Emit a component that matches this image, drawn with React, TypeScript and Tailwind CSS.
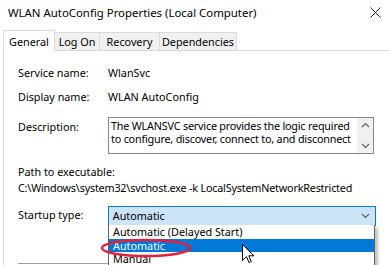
import React from "react";

const font = { fontFamily: '"Noto Sans", "Open Sans", sans-serif' };

function Chevron({ up }: { up?: boolean }) {
  return (
    <svg width="9" height="6" viewBox="0 0 9 6" className="block">
      <path d={up ? "M1 5 L4.5 1.5 L8 5" : "M1 1 L4.5 4.5 L8 1"} fill="none" stroke="#606060" strokeWidth="1.2" />
    </svg>
  );
}

export default function App() {
  return (
    <div className="relative w-[390px] h-[265px] overflow-hidden bg-white text-black text-[10.8px] leading-[16px]" style={font}>
      {/* Title bar */}
      <div className="h-[25px] flex items-center justify-between pl-[8px] pr-[9px]">
        <span className="text-[11.4px]">WLAN AutoConfig Properties (Local Computer)</span>
        <svg width="11" height="11" viewBox="0 0 11 11">
          <path d="M0.5 0.5 L10.5 10.5 M10.5 0.5 L0.5 10.5" stroke="#222" strokeWidth="1" />
        </svg>
      </div>
      {/* Tabs */}
      <div className="h-[25px] flex items-end pl-[3px]">
        <div className="relative z-10 -mb-px h-[21px] w-[52px] bg-white border border-b-0 border-[#d9d9d9] flex items-start justify-center pt-[3px]">General</div>
        <div className="h-[18px] w-[45px] bg-[#f0f0f0] border-t border-r border-[#d9d9d9] flex items-center justify-center">Log On</div>
        <div className="h-[18px] w-[60px] bg-[#f0f0f0] border-t border-r border-[#d9d9d9] flex items-center justify-center">Recovery</div>
        <div className="h-[18px] w-[77px] bg-[#f0f0f0] border-t border-r border-[#d9d9d9] flex items-center justify-center">Dependencies</div>
      </div>
      {/* Panel */}
      <div className="ml-[3px] h-[215px] border-t border-l border-[#d9d9d9] pl-[14px] pr-[14px] flex flex-col">
        <div className="mt-[14px] flex h-[16px]">
          <span className="w-[90px]">Service name:</span>
          <span>WlanSvc</span>
        </div>
        <div className="mt-[8px] flex h-[16px]">
          <span className="w-[90px]">Display name:</span>
          <span>WLAN AutoConfig</span>
        </div>
        <div className="mt-[12px] flex">
          <span className="w-[90px] pt-[2px]">Description:</span>
          <div className="w-[266px] h-[37px] border border-[#828790] flex">
            <div className="flex-1 pl-[2px] pt-[1px] leading-[13px] tracking-[-0.2px] whitespace-nowrap overflow-hidden">
              <div>The WLANSVC service provides the logic required</div>
              <div>to configure, discover, connect to, and disconnect</div>
            </div>
            <div className="w-[16px] bg-[#f0f0f0] flex flex-col items-center justify-between py-[4px]">
              <Chevron up />
              <Chevron />
            </div>
          </div>
        </div>
        <div className="mt-[10px] h-[16px]">Path to executable:</div>
        <div className="h-[15px] whitespace-nowrap tracking-[-0.2px]">C:\Windows\system32\svchost.exe -k LocalSystemNetworkRestricted</div>
        <div className="mt-[11px] flex">
          <span className="w-[90px] pt-[1px]">Startup type:</span>
          <div className="w-[269px] h-[20px] bg-[#cce4f7] border border-[#0078d7] flex items-center justify-between pl-[4px] pr-[5px]">
            <span>Automatic</span>
            <Chevron />
          </div>
        </div>
        <div className="mt-[37px] h-px bg-[#a0a0a0] w-[100px]" />
      </div>

      {/* Dropdown list */}
      <div className="absolute left-[108px] top-[225px] w-[267px] h-[44px] bg-white border border-t-0 border-[#646464] shadow-[3px_3px_3px_rgba(0,0,0,0.25)] flex flex-col">
        <div className="h-[14px] leading-[14px] pl-[4px]">Automatic (Delayed Start)</div>
        <div className="h-[13px] leading-[13px] pl-[4px] bg-[#0078d7] text-white">Automatic</div>
        <div className="h-[14px] leading-[14px] pl-[4px]">Manual</div>
      </div>

      {/* Red ellipse */}
      <svg className="absolute left-[100px] top-[238px]" width="92" height="20" viewBox="0 0 92 20">
        <ellipse cx="46" cy="10" rx="44" ry="8" fill="none" stroke="#e0223c" strokeWidth="2.5" />
      </svg>

      {/* Cursor */}
      <svg className="absolute left-[242px] top-[244px]" width="13" height="20" viewBox="0 0 13 20">
        <path d="M0.5 0.5 L0.5 16.5 L4.5 12.7 L7 18.5 L9.3 17.5 L6.8 11.8 L12 11.8 Z" fill="white" stroke="black" strokeWidth="1" strokeLinejoin="miter" />
      </svg>
    </div>
  );
}
